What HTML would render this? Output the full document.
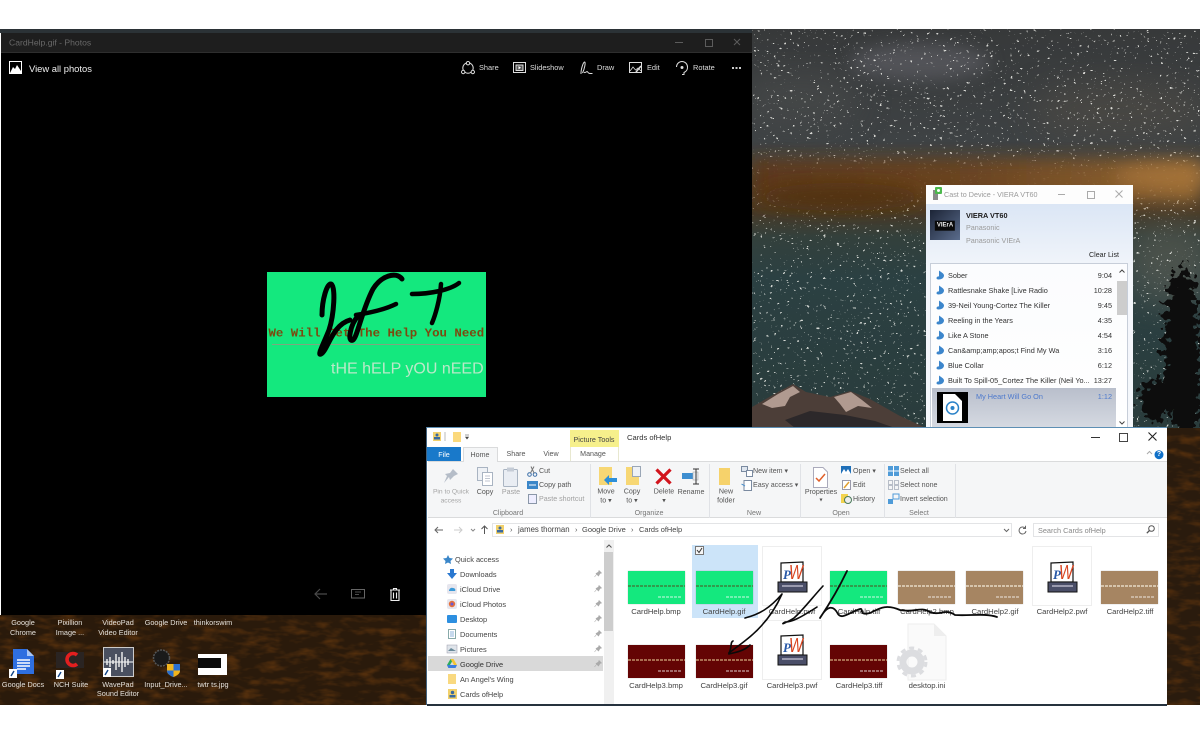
<!DOCTYPE html>
<html><head><meta charset="utf-8"><style>
html,body{margin:0;padding:0;background:#fff}
#p{position:relative;width:1200px;height:734px;overflow:hidden;background:#fff;font-family:"Liberation Sans",sans-serif;font-size:8px;color:#333;filter:blur(.3px)}
.a{position:absolute}
.t,.c,.r{position:absolute;white-space:nowrap;line-height:1}
.t{transform:translateY(calc(-50% + .7px))}
.c{transform:translate(-50%,calc(-50% + .7px));text-align:center}
.r{transform:translate(-100%,calc(-50% + .7px))}
svg{position:absolute;overflow:visible}
.w{color:#f0f0f0}
.g{color:#9a9a9a;font-size:7.2px}
.d{color:#e4e0da;font-size:7.3px}
.tb{color:#ddd;font-size:7.4px}
.th{position:absolute;width:57px;height:33px;box-shadow:0 0 1px rgba(0,0,0,.3)}
.th i{position:absolute;left:0;right:0;top:14px;height:1.500px;opacity:.7;background:repeating-linear-gradient(90deg,currentColor 0 3px,transparent 3px 4px)}
.th b{position:absolute;left:30px;right:3px;top:25px;height:2px;background:repeating-linear-gradient(90deg,#fff6 0 3px,transparent 3px 4px)}
.gr{background:#14e87e;color:#3f7a3a}
.br{background:#a68562;color:#eadfcc}
.rd{background:#640404;color:#c89a70}
.n{font-size:7.4px;color:#444}
.f{font-size:7.700px;color:#444}
.l{font-size:7.300px;color:#333}
.sep{position:absolute;top:464px;height:54px;width:1px;background:#e0e2e6}
.rb{font-size:7.100px;color:#555}
</style></head><body><div id="p">

<!-- wallpaper -->
<svg class="a" style="left:0;top:0" width="1200" height="734">
<defs>
<linearGradient id="sky" x1="0" y1="0" x2="0" y2="1">
<stop offset="0" stop-color="#37393a"/><stop offset=".28" stop-color="#3e4244"/><stop offset=".34" stop-color="#4a443a"/><stop offset=".45" stop-color="#4a3a26"/><stop offset=".52" stop-color="#33403c"/><stop offset=".62" stop-color="#2b4042"/><stop offset="1" stop-color="#2a3c3c"/>
</linearGradient>
<linearGradient id="band" x1="0" y1="0" x2="1" y2="0"><stop offset="0" stop-color="#5e3819"/><stop offset=".5" stop-color="#6e4520"/><stop offset="1" stop-color="#9a6c34"/></linearGradient>
<filter id="bl" x="-30%" y="-50%" width="160%" height="200%"><feGaussianBlur stdDeviation="8"/></filter>
<filter id="bl2" x="-30%" y="-30%" width="160%" height="160%"><feGaussianBlur stdDeviation="16"/></filter>
<filter id="st" x="0" y="0" width="100%" height="100%"><feTurbulence type="fractalNoise" baseFrequency="0.3 0.4" numOctaves="2" seed="7"/><feColorMatrix type="matrix" values="0 0 0 0 1 0 0 0 0 1 0 0 0 0 .95 20 0 0 0 -14"/></filter>
<filter id="gr" x="0" y="0" width="100%" height="100%" color-interpolation-filters="sRGB"><feTurbulence type="fractalNoise" baseFrequency="0.05 0.14" numOctaves="3" seed="3"/><feColorMatrix type="matrix" values="0 0 0 0 .32 0 0 0 0 .18 0 0 0 0 .05 2.600 0 0 0 -1.150"/></filter>
<filter id="tr" x="-20%" y="-20%" width="140%" height="140%"><feTurbulence type="fractalNoise" baseFrequency="0.16" numOctaves="2" seed="11" result="n"/><feDisplacementMap in="SourceGraphic" in2="n" scale="26" xChannelSelector="R" yChannelSelector="G"/></filter>
</defs>
<rect x="752" y="29" width="448" height="400" fill="url(#sky)"/>
<ellipse cx="920" cy="62" rx="70" ry="18" fill="#63636a" opacity=".6" filter="url(#bl)"/>
<ellipse cx="1120" cy="110" rx="90" ry="30" fill="#4f4c45" opacity=".6" filter="url(#bl2)"/>
<ellipse cx="800" cy="100" rx="60" ry="30" fill="#484c4c" opacity=".6" filter="url(#bl2)"/>
<ellipse cx="1170" cy="265" rx="45" ry="40" fill="#5f5e54" opacity=".6" filter="url(#bl2)"/>
<rect x="752" y="29" width="448" height="400" filter="url(#st)" opacity=".8"/>
<rect x="752" y="160" width="448" height="42" fill="url(#band)" opacity=".92" filter="url(#bl)"/>
<ellipse cx="1170" cy="176" rx="55" ry="12" fill="#b07a3c" opacity=".6" filter="url(#bl)"/>
<ellipse cx="840" cy="197" rx="80" ry="14" fill="#51300f" opacity=".8" filter="url(#bl)"/>
<path d="M752 428V407L778 392 793 384 806 392 830 397 850 391 870 399 900 416 926 428Z" fill="#4c3e38"/>
<path d="M762 404L778 394 793 386 800 392 790 397 785 406 772 408ZM834 397L851 392 862 400 872 408 858 406 846 412 840 404Z" fill="#b09a90"/>
<path d="M785 420L810 411 845 415 875 421 895 428H795Z" fill="#2c282a"/>
<g filter="url(#tr)" fill="#0e0d0b">
<ellipse cx="1182" cy="350" rx="18" ry="82"/>
<ellipse cx="1155" cy="400" rx="16" ry="20"/>
<ellipse cx="1185" cy="300" rx="6" ry="36"/>
<rect x="1176" y="380" width="24" height="50"/>
</g>
<rect x="1167" y="428" width="33" height="277" fill="#2a1b0d"/>
<rect x="1167" y="428" width="33" height="277" filter="url(#gr)"/>
<rect x="0" y="615" width="427" height="90" fill="#2a1a0b"/>
<rect x="0" y="615" width="427" height="90" filter="url(#gr)"/>
<rect x="0" y="29" width="752" height="4" fill="#2b3236"/>
</svg>

<!-- photos window -->
<div class="a" style="left:1px;top:33px;width:751px;height:19px;background:#1e1e1e;border-bottom:1px solid #2e2e2e"></div>
<div class="a" style="left:1px;top:53px;width:751px;height:562px;background:#000"></div>
<div class="t" style="left:9px;top:42px;font-size:8.600px;color:#686868">CardHelp.gif - Photos</div>
<div class="a" style="left:675px;top:42px;width:8px;height:1px;background:#5c5c5c"></div>
<div class="a" style="left:705px;top:39px;width:6px;height:6px;border:1px solid #5c5c5c"></div>
<svg style="left:733px;top:38px" width="8" height="8"><path d="M1 1L7 7M7 1L1 7" stroke="#5c5c5c"/></svg>

<svg style="left:9px;top:61px" width="13" height="13"><rect x=".5" y=".5" width="12" height="12" fill="#000" stroke="#fff"/><path d="M1 12L4 6 6 8 8 4 12 10V12Z" fill="#fff"/></svg>
<div class="t w" style="left:29px;top:68px;font-size:9.400px">View all photos</div>

<svg style="left:461px;top:61px" width="14" height="14" fill="none" stroke="#ddd"><circle cx="7" cy="7" r="5.200"/><circle cx="7" cy="2.200" r="1.700" fill="#000"/><circle cx="2.200" cy="11" r="1.700" fill="#000"/><circle cx="11.800" cy="11" r="1.700" fill="#000"/></svg>
<div class="t tb" style="left:479px;top:67px">Share</div>
<svg style="left:513px;top:62px" width="13" height="12" fill="none" stroke="#ddd"><rect x=".5" y=".5" width="12" height="10"/><rect x="3" y="3" width="7" height="5.500" fill="#555"/><path d="M5.500 4L8 5.700 5.500 7.400Z" fill="#fff" stroke="none"/></svg>
<div class="t tb" style="left:530px;top:67px">Slideshow</div>
<svg style="left:580px;top:61px" width="13" height="14" fill="none" stroke="#ddd"><path d="M1 13C.8 9 3 1.500 4.500 1 6 1 4.500 8 2.500 12M4 11C5 13 7 9 8 11.500 9 13 11 12.500 12.500 12.500"/></svg>
<div class="t tb" style="left:597px;top:67px">Draw</div>
<svg style="left:629px;top:62px" width="13" height="12" fill="none" stroke="#ddd"><rect x=".5" y=".5" width="12" height="10"/><path d="M1 9L4 5 6.500 8 9 6 12 9" stroke-width=".8"/><path d="M7 10L12 4" stroke-width="1.600"/></svg>
<div class="t tb" style="left:647px;top:67px">Edit</div>
<svg style="left:675px;top:61px" width="14" height="14" fill="none" stroke="#ddd"><path d="M1.500 6A5.500 5.500 0 0 1 12.500 6 5.500 5.500 0 0 1 9 11.500V13.500H7"/><circle cx="7" cy="6.500" r="1" fill="#ddd"/></svg>
<div class="t tb" style="left:693px;top:67px">Rotate</div>
<div class="a" style="left:732px;top:67px;width:2px;height:2px;background:#ccc;box-shadow:3.500px 0 #ccc,7px 0 #ccc"></div>

<!-- card -->
<div class="a" style="left:267px;top:272px;width:219px;height:124.500px;background:#14e87e"></div>
<div class="t" style="left:268.500px;top:333px;font:bold 12.400px 'Liberation Mono',monospace;color:#7b4a10">We Will Get The Help You Need</div>
<div class="a" style="left:272px;top:343.500px;width:208px;height:1.500px;background:#7fa67f"></div>
<div class="t" style="left:331px;top:368.500px;font-size:16px;color:#b9e9c8">tHE hELP yOU nEED</div>
<svg style="left:0;top:0" width="1200" height="734" fill="none" stroke="#000" stroke-width="5" stroke-linecap="round" stroke-linejoin="round">
<path d="M322 315C322 300 327 283 331 284 336 286 334 315 329 330 323 345 317 356 321 354 328 350 332 325 350 320"/>
<path d="M402 279C396 271 381 276 373 289 362 310 357 338 353 340 347 343 350 325 358 316"/>
<path d="M356 315C375 312 388 308 396 304" stroke-width="4.500"/>
<path d="M412 294C430 294 450 290 459 283M441 284C440 300 435 316 432 323" stroke-width="4.500"/>
</svg>

<svg style="left:314px;top:588px" width="13" height="12" fill="none" stroke="#4a4a4a" stroke-width="1.200"><path d="M13 6H1M6 1L1 6 6 11"/></svg>
<svg style="left:351px;top:589px" width="14" height="11" fill="none" stroke="#666"><rect x=".5" y=".5" width="13" height="8.500"/><path d="M4 3H10M4 5.500H8" stroke-width=".8"/></svg>
<svg style="left:390px;top:588px" width="10" height="13" fill="none" stroke="#eee" stroke-width="1.100"><path d="M0 2H10M3.500 2V.5H6.500V2M1 2V12.500H9V2M3.500 4.500V10.500M6.500 4.500V10.500"/></svg>

<!-- desktop -->
<div class="c d" style="left:23px;top:627px;line-height:9.600px">Google<br>Chrome</div>
<div class="c d" style="left:70px;top:627px;line-height:9.600px">Pixillion<br>Image ...</div>
<div class="c d" style="left:118px;top:627px;line-height:9.600px">VideoPad<br>Video Editor</div>
<div class="c d" style="left:166px;top:622px">Google Drive</div>
<div class="c d" style="left:213px;top:622px">thinkorswim</div>
<svg style="left:9px;top:649px" width="26" height="30"><path d="M4 0H18L25 7V25H4Z" fill="#2f6fe0"/><path d="M18 0L25 7H18Z" fill="#a9c6f5"/><path d="M8 11H21M8 14H21M8 17H21M8 20H17" stroke="#fff" stroke-width="1.400"/><rect y="20" width="8" height="9" fill="#fff"/><path d="M2 27L5 22" stroke="#148" stroke-width="1.400"/></svg>
<div class="c d" style="left:23px;top:684px">Google Docs</div>
<svg style="left:56px;top:651px" width="30" height="28"><rect width="28" height="16" y="1" fill="#2a2422"/><path d="M21 4A6 6 0 1 0 21 13" fill="none" stroke="#e21f1f" stroke-width="3.600"/><rect x="0" y="19" width="8" height="9" fill="#fff"/><path d="M2 26L5 21" stroke="#148" stroke-width="1.400"/></svg>
<div class="c d" style="left:71px;top:684px">NCH Suite</div>
<svg style="left:103px;top:647px" width="31" height="30"><rect width="30" height="29" x=".5" y=".5" fill="#4a5060" stroke="#ccc"/><path d="M1 15H30" stroke="#fff"/><path d="M4 12V18M7 10V20M10 13V17M13 7V23M16 10V20M19 5V25M22 10V20M25 12V18" stroke="#f2f2f2" stroke-width="1.400"/><rect x="0" y="21" width="8" height="9" fill="#fff"/><path d="M2 28L5 23" stroke="#148" stroke-width="1.400"/></svg>
<div class="c d" style="left:118px;top:688.500px;line-height:9.600px">WavePad<br>Sound Editor</div>
<svg style="left:152px;top:648px" width="30" height="30"><circle cx="9.500" cy="10" r="8" fill="#1a1a1a" stroke="#555" stroke-width="1.500" stroke-dasharray="2 1"/><path d="M15 16H28V23C28 26 24 28 21.500 29 19 28 15 26 15 23Z" fill="#f2b51d"/><path d="M21.500 16H28V22.500H21.500ZM15 22.500H21.500V29C19 28 15 26 15 23Z" fill="#2a6fd0"/></svg>
<div class="c d" style="left:166px;top:684px">Input_Drive...</div>
<div class="a" style="left:198px;top:654px;width:29px;height:21px;background:#fff"></div>
<div class="a" style="left:198px;top:658px;width:23px;height:10px;background:#0b0b0b"></div>
<div class="c d" style="left:213px;top:684px">twtr ts.jpg</div>

<!-- cast window -->
<div class="a" style="left:926px;top:185px;width:207px;height:19px;background:#fdfdfd"></div>
<div class="a" style="left:926px;top:204px;width:207px;height:224px;background:linear-gradient(#dbe6f5,#f3f6fb 30%,#f5f7fb)"></div>
<svg style="left:932px;top:187px" width="11" height="14"><rect x="1" y="3" width="5" height="10" fill="#8a8a8a"/><rect x="3" y="0" width="7" height="7" rx="1" fill="#4cb84c"/><circle cx="6.500" cy="3.500" r="1.500" fill="#fff"/></svg>
<div class="t" style="left:944px;top:194px;font-size:7.200px;color:#9a9a9a">Cast to Device - VIERA VT60</div>
<div class="a" style="left:1058px;top:194px;width:7px;height:1px;background:#aaa"></div>
<div class="a" style="left:1087px;top:190.500px;width:6px;height:6px;border:1px solid #aaa"></div>
<svg style="left:1115px;top:190px" width="8" height="8"><path d="M.5 .5L7.500 7.500M7.500 .5L.5 7.500" stroke="#aaa"/></svg>
<div class="a" style="left:930px;top:210px;width:30px;height:30px;background:linear-gradient(135deg,#1c2436,#5a6c8c)"></div>
<div class="c" style="left:945px;top:225px;background:#0a0a0a;color:#eee;font:bold 6px 'Liberation Sans',sans-serif;padding:2px 2px">VIErA</div>
<div class="t" style="left:966px;top:215px;font-weight:bold;font-size:7.300px;color:#1a1a1a">VIERA VT60</div>
<div class="t g" style="left:966px;top:227px">Panasonic</div>
<div class="t g" style="left:966px;top:239.500px">Panasonic VIErA</div>
<div class="r" style="left:1119px;top:255px;color:#222;font-size:7.100px">Clear List</div>
<div class="a" style="left:930px;top:263px;width:198px;height:165px;background:linear-gradient(#fbfcfe,#fff);border:1px solid #c7ced9;border-bottom:0;box-sizing:border-box"></div>
<div class="a" style="left:1117px;top:281px;width:10px;height:34px;background:#cdcdcd"></div>
<svg style="left:1119px;top:269px" width="6" height="4" fill="none" stroke="#444"><path d="M.5 3.500L3 1 5.500 3.500"/></svg>
<svg style="left:1119px;top:421px" width="6" height="4" fill="none" stroke="#444"><path d="M.5 .5L3 3 5.500 .5"/></svg>

<svg style="left:936px;top:270px" width="9" height="120" fill="#3c86cc">
<path d="M3 .5C5 2 8 3.500 8 5.500 8 8 5.500 9.500 2.500 9.500 .5 9.500 0 8 1 7 1.800 6.300 2.500 6.300 3 6.500Z"/>
<path transform="translate(0,15)" d="M3 .5C5 2 8 3.500 8 5.500 8 8 5.500 9.500 2.500 9.500 .5 9.500 0 8 1 7 1.800 6.300 2.500 6.300 3 6.500Z"/>
<path transform="translate(0,30)" d="M3 .5C5 2 8 3.500 8 5.500 8 8 5.500 9.500 2.500 9.500 .5 9.500 0 8 1 7 1.800 6.300 2.500 6.300 3 6.500Z"/>
<path transform="translate(0,45)" d="M3 .5C5 2 8 3.500 8 5.500 8 8 5.500 9.500 2.500 9.500 .5 9.500 0 8 1 7 1.800 6.300 2.500 6.300 3 6.500Z"/>
<path transform="translate(0,60)" d="M3 .5C5 2 8 3.500 8 5.500 8 8 5.500 9.500 2.500 9.500 .5 9.500 0 8 1 7 1.800 6.300 2.500 6.300 3 6.500Z"/>
<path transform="translate(0,75)" d="M3 .5C5 2 8 3.500 8 5.500 8 8 5.500 9.500 2.500 9.500 .5 9.500 0 8 1 7 1.800 6.300 2.500 6.300 3 6.500Z"/>
<path transform="translate(0,90)" d="M3 .5C5 2 8 3.500 8 5.500 8 8 5.500 9.500 2.500 9.500 .5 9.500 0 8 1 7 1.800 6.300 2.500 6.300 3 6.500Z"/>
<path transform="translate(0,105)" d="M3 .5C5 2 8 3.500 8 5.500 8 8 5.500 9.500 2.500 9.500 .5 9.500 0 8 1 7 1.800 6.300 2.500 6.300 3 6.500Z"/>
</svg>
<div class="t l" style="left:948px;top:275px">Sober</div><div class="r l" style="left:1112px;top:275px">9:04</div>
<div class="t l" style="left:948px;top:290px">Rattlesnake Shake [Live Radio</div><div class="r l" style="left:1112px;top:290px">10:28</div>
<div class="t l" style="left:948px;top:305px">39-Neil Young-Cortez The Killer</div><div class="r l" style="left:1112px;top:305px">9:45</div>
<div class="t l" style="left:948px;top:320px">Reeling in the Years</div><div class="r l" style="left:1112px;top:320px">4:35</div>
<div class="t l" style="left:948px;top:335px">Like A Stone</div><div class="r l" style="left:1112px;top:335px">4:54</div>
<div class="t l" style="left:948px;top:350px">Can&amp;amp;amp;apos;t Find My Wa</div><div class="r l" style="left:1112px;top:350px">3:16</div>
<div class="t l" style="left:948px;top:365px">Blue Collar</div><div class="r l" style="left:1112px;top:365px">6:12</div>
<div class="t l" style="left:948px;top:380px">Built To Spill-05_Cortez The Killer (Neil Yo...</div><div class="r l" style="left:1112px;top:380px">13:27</div>
<div class="a" style="left:932px;top:388px;width:184px;height:40px;background:linear-gradient(#b9bfcc,#d6dae2)"></div>
<div class="a" style="left:937px;top:392px;width:31px;height:31px;background:#000"></div>
<svg style="left:942px;top:393px" width="21" height="29"><path d="M1 1H13L20 8V28H1Z" fill="#fff"/><circle cx="10.500" cy="15" r="6" fill="none" stroke="#2a82c8" stroke-width="1.500"/><circle cx="10.500" cy="15" r="2" fill="#2a82c8"/></svg>
<div class="t" style="left:976px;top:396px;color:#4d79cc;font-size:7.300px">My Heart Will Go On</div>
<div class="r" style="left:1112px;top:396px;color:#4d79cc;font-size:7.300px">1:12</div>

<!-- explorer -->
<div class="a" style="left:426px;top:427px;width:741px;height:278px;background:#fff;border-left:1px solid #43637f;border-top:1px solid #5d8fb4;box-sizing:border-box"></div>
<div class="a" style="left:427px;top:704px;width:740px;height:1.500px;background:#26323e"></div>
<div class="a" style="left:428px;top:461px;width:739px;height:57px;background:#f5f6f7;border-top:1px solid #dadbdc;border-bottom:1px solid #dadbdc;box-sizing:border-box"></div>

<svg style="left:432px;top:431px" width="40" height="12"><rect x="1" y="1" width="8" height="9" fill="#f2d16b"/><circle cx="5" cy="4" r="1.500" fill="#3a6aa0"/><rect x="2" y="6" width="6" height="2.500" fill="#3a6aa0"/><path d="M13 1V10" stroke="#bbb"/><rect x="21" y="1" width="8" height="10" fill="#fbd97c"/><path d="M33 4H37M33.500 6L35 8 36.500 6Z" fill="#444" stroke="#444" stroke-width=".6"/></svg>
<div class="a" style="left:570px;top:430px;width:49px;height:17px;background:#f6f08c"></div>
<div class="c" style="left:594px;top:438.500px;font-size:7.200px;color:#444">Picture Tools</div>
<div class="t" style="left:627px;top:437px;font-size:7.600px;color:#333">Cards ofHelp</div>
<div class="a" style="left:1091px;top:437px;width:9px;height:1.200px;background:#333"></div>
<div class="a" style="left:1119px;top:433px;width:7px;height:7px;border:1px solid #444"></div>
<svg style="left:1148px;top:432px" width="9" height="9"><path d="M.5 .5L8.500 8.500M8.500 .5L.5 8.500" stroke="#222" stroke-width="1.100"/></svg>
<svg style="left:1146px;top:450px" width="7" height="5"><path d="M1 4L3.500 1.500 6 4" fill="none" stroke="#aaa"/></svg>
<div class="c" style="left:1159px;top:453.500px;width:9px;height:9px;line-height:9px;border-radius:5px;background:#1070c8;color:#fff;font-size:7px;font-weight:bold">?</div>

<div class="a" style="left:427px;top:447px;width:34px;height:14px;background:#1979ca"></div>
<div class="c" style="left:444px;top:453.500px;color:#fff;font-size:7.200px">File</div>
<div class="a" style="left:463px;top:447px;width:35px;height:15px;background:#f5f6f7;border:1px solid #dadbdc;border-bottom:0;box-sizing:border-box"></div>
<div class="c rb" style="left:480px;top:454.500px">Home</div>
<div class="c rb" style="left:516px;top:454px">Share</div>
<div class="c rb" style="left:551px;top:454px">View</div>
<div class="a" style="left:570px;top:447px;width:49px;height:14px;border-left:1px solid #e8e8d0;border-right:1px solid #e8e8d0;box-sizing:border-box"></div>
<div class="c rb" style="left:593px;top:454px">Manage</div>

<!-- ribbon: clipboard -->
<svg style="left:443px;top:468px" width="16" height="16"><path d="M10 1L15 6 11 8 7 12 6 9 1 15 4 8 2 6 7 5Z" fill="#b5bdc8"/></svg>
<div class="c rb" style="left:451px;top:496px;line-height:9px;color:#a5a5a5;font-size:6.700px">Pin to Quick<br>access</div>
<svg style="left:477px;top:467px" width="17" height="19"><rect x=".5" y=".5" width="10" height="13" fill="#eef1f5" stroke="#a9b4c2"/><rect x="5.500" y="5.500" width="10" height="13" fill="#fff" stroke="#a9b4c2"/><path d="M8 9H13M8 11.500H13M8 14H13" stroke="#c0c6d0"/></svg>
<div class="c rb" style="left:485px;top:492px">Copy</div>
<svg style="left:503px;top:467px" width="16" height="20"><rect x=".5" y="2.500" width="14" height="17" rx="1" fill="#e9edf3" stroke="#a9b4c2"/><rect x="4" y=".5" width="7" height="4" fill="#c5ccd6"/></svg>
<div class="c rb" style="left:511px;top:492px;color:#a0a0a0">Paste</div>
<svg style="left:527px;top:466px" width="11" height="11" fill="none" stroke="#3a6ea8"><circle cx="2.500" cy="8.500" r="1.800"/><circle cx="8" cy="8.500" r="1.800"/><path d="M3.500 7L7 .5M7 7L4 .5" stroke="#777"/></svg>
<div class="t rb" style="left:539px;top:470.500px">Cut</div>
<svg style="left:527px;top:481px" width="11" height="8"><rect width="11" height="8" fill="#3a86c8"/><path d="M2 4H9" stroke="#fff"/></svg>
<div class="t rb" style="left:539px;top:484.500px">Copy path</div>
<svg style="left:528px;top:494px" width="9" height="10"><rect x=".5" y=".5" width="8" height="9" fill="#eef" stroke="#8a97a8"/></svg>
<div class="t rb" style="left:539px;top:498.500px;color:#a0a0a0">Paste shortcut</div>
<div class="c rb" style="left:508px;top:512.500px;color:#777">Clipboard</div>
<div class="sep" style="left:590px"></div>

<!-- organize -->
<svg style="left:599px;top:466px" width="18" height="20"><rect y="1" width="13" height="18" fill="#f7d774"/><path d="M18 12H10V9L5 14 10 19V16H18Z" fill="#2d8fd8"/></svg>
<div class="c rb" style="left:606px;top:496px;line-height:9px">Move<br>to ▾</div>
<svg style="left:626px;top:466px" width="17" height="20"><rect y="1" width="13" height="18" fill="#f7d774"/><rect x="6.500" y=".5" width="8" height="10" fill="#eef1f5" stroke="#9aa6b6"/></svg>
<div class="c rb" style="left:632px;top:496px;line-height:9px">Copy<br>to ▾</div>
<svg style="left:655px;top:468px" width="17" height="17"><path d="M1.500 1.500L15.500 15.500M15.500 1.500L1.500 15.500" stroke="#d2141c" stroke-width="3.200"/></svg>
<div class="c rb" style="left:664px;top:496px;line-height:9px">Delete<br>▾</div>
<svg style="left:682px;top:468px" width="19" height="17"><rect y="5" width="11" height="6" fill="#3e8ed0"/><rect x="11" y="4" width="5" height="8" fill="#e8ecf2" stroke="#aaa" stroke-width=".6"/><path d="M11 1H17M14 1V16M11 16H17" stroke="#333" stroke-width="1"/></svg>
<div class="c rb" style="left:691px;top:492px">Rename</div>
<div class="c rb" style="left:649px;top:512.500px;color:#777">Organize</div>
<div class="sep" style="left:709px"></div>

<!-- new -->
<svg style="left:719px;top:468px" width="12" height="18"><rect width="11" height="17" fill="#f6d26b"/></svg>
<div class="c rb" style="left:726px;top:496px;line-height:9px">New<br>folder</div>
<svg style="left:741px;top:466px" width="12" height="11" fill="none" stroke="#7a8aa0"><rect x=".5" y=".5" width="6" height="5" fill="#dfe6ef"/><rect x="5.500" y="4.500" width="6" height="6" fill="#fff"/></svg>
<div class="t rb" style="left:753px;top:470.500px">New item ▾</div>
<svg style="left:741px;top:480px" width="11" height="11" fill="none" stroke="#7a8aa0"><path d="M3 .5H10.500V10.500H3Z" fill="#fff"/><path d="M.5 4L4 6" stroke="#3a86c8"/></svg>
<div class="t rb" style="left:753px;top:484.500px">Easy access ▾</div>
<div class="c rb" style="left:754px;top:512.500px;color:#777">New</div>
<div class="sep" style="left:800px"></div>

<!-- open -->
<svg style="left:813px;top:467px" width="15" height="21"><path d="M.5 .5H10L14.500 5V20.500H.5Z" fill="#fff" stroke="#aab"/><path d="M3 11L6 14 12 7" fill="none" stroke="#e0602a" stroke-width="1.500"/></svg>
<div class="c rb" style="left:821px;top:492px">Properties</div>
<div class="c rb" style="left:821px;top:500px;font-size:6px">▾</div>
<svg style="left:841px;top:466px" width="10" height="8"><rect width="10" height="8" fill="#1f6fb8"/><path d="M0 8L3 3 5 6 7 3 10 8Z" fill="#fff"/></svg>
<div class="t rb" style="left:853px;top:470.500px">Open ▾</div>
<svg style="left:842px;top:480px" width="9" height="10"><rect x=".5" y=".5" width="8" height="9" fill="#fff" stroke="#99a"/><path d="M2 8L7 2" stroke="#e2a030" stroke-width="1.500"/></svg>
<div class="t rb" style="left:853px;top:484.500px">Edit</div>
<svg style="left:841px;top:494px" width="11" height="10"><rect width="7" height="9" fill="#f2d34e"/><circle cx="7" cy="6" r="3.500" fill="#eee" stroke="#4a7a5a"/></svg>
<div class="t rb" style="left:853px;top:498.500px">History</div>
<div class="c rb" style="left:841px;top:512.500px;color:#777">Open</div>
<div class="sep" style="left:884px"></div>

<!-- select -->
<svg style="left:888px;top:466px" width="11" height="10"><rect width="11" height="10" fill="#4f9bd8"/><path d="M5.500 0V10M0 5H11" stroke="#fff"/></svg>
<div class="t rb" style="left:900px;top:470.500px">Select all</div>
<svg style="left:888px;top:480px" width="11" height="10" fill="none" stroke="#b8bec8"><rect x=".5" y=".5" width="4" height="4"/><rect x="6.500" y=".5" width="4" height="4"/><rect x=".5" y="5.500" width="4" height="4"/><rect x="6.500" y="5.500" width="4" height="4"/></svg>
<div class="t rb" style="left:900px;top:484.500px">Select none</div>
<svg style="left:888px;top:494px" width="11" height="10"><rect x="5" width="6" height="5" fill="none" stroke="#4f9bd8"/><rect y="5" width="5" height="5" fill="#4f9bd8"/></svg>
<div class="t rb" style="left:900px;top:498.500px">Invert selection</div>
<div class="c rb" style="left:919px;top:512.500px;color:#777">Select</div>
<div class="sep" style="left:955px"></div>

<!-- address -->
<svg style="left:434px;top:525px" width="60" height="10" fill="none"><path d="M9 5H1M4 2L1 5 4 8" stroke="#666"/><path d="M20 5H28M25 2L28 5 25 8" stroke="#ccc"/><path d="M37 4L39 6 41 4" stroke="#888"/><path d="M50.500 9V1M47.500 4L50.500 1 53.500 4" stroke="#555"/></svg>
<div class="a" style="left:492px;top:523px;width:520px;height:14px;border:1px solid #e3e4e6;box-sizing:border-box"></div>
<svg style="left:496px;top:525px" width="9" height="9"><rect width="8" height="9" fill="#f2d16b"/><circle cx="4" cy="3" r="1.500" fill="#3a6aa0"/><rect x="1" y="5" width="6" height="2.500" fill="#3a6aa0"/></svg>
<div class="t n" style="left:510px;top:529px;color:#555">›</div>
<div class="t n" style="left:518px;top:529px;font-size:7.800px">james thorman</div>
<div class="t n" style="left:575px;top:529px;color:#555">›</div>
<div class="t n" style="left:582px;top:529px;font-size:7.500px">Google Drive</div>
<div class="t n" style="left:631px;top:529px;color:#555">›</div>
<div class="t n" style="left:639px;top:529px">Cards ofHelp</div>
<svg style="left:1004px;top:525px" width="24" height="10" fill="none" stroke="#666"><path d="M0 4L2.500 6.500 5 4"/><path d="M21 3A3.500 3.500 0 1 0 22 6M21.500 .8V3.500H19"/></svg>
<div class="a" style="left:1033px;top:523px;width:126px;height:14px;border:1px solid #e3e4e6;box-sizing:border-box"></div>
<div class="t" style="left:1038px;top:529.500px;font-size:7.300px;color:#888">Search Cards ofHelp</div>
<svg style="left:1146px;top:525px" width="9" height="9" fill="none" stroke="#555"><circle cx="5.500" cy="3.500" r="2.800"/><path d="M3.500 5.500L.8 8.200" stroke-width="1.300"/></svg>

<!-- nav -->
<div class="a" style="left:428px;top:656px;width:175px;height:15px;background:#d9d9d9"></div>
<div class="a" style="left:604px;top:540px;width:10px;height:164px;background:#f0f0f0"></div>
<div class="a" style="left:604px;top:552px;width:9px;height:79px;background:#cdcdcd"></div>
<svg style="left:606px;top:544px" width="6" height="4" fill="none" stroke="#555"><path d="M.5 3.500L3 1 5.500 3.500"/></svg>
<svg style="left:443px;top:555px" width="10" height="9"><path d="M5 0L6.500 3 10 3.500 7.500 6 8 9 5 7.500 2 9 2.500 6 0 3.500 3.500 3Z" fill="#3a86c8"/></svg>
<div class="t n" style="left:455px;top:559px">Quick access</div>
<svg style="left:447px;top:569px" width="10" height="10"><path d="M3 0H7V4H10L5 10 0 4H3Z" fill="#2a78d0"/></svg>
<div class="t n" style="left:460px;top:574px">Downloads</div>
<svg style="left:447px;top:584px" width="10" height="10"><rect width="10" height="10" rx="2" fill="#e6e6ee"/><path d="M2 7C2 5 4 3 6 4 8 4 9 6 8 7Z" fill="#3a9ad8"/></svg>
<div class="t n" style="left:460px;top:589px">iCloud Drive</div>
<svg style="left:447px;top:599px" width="10" height="10"><rect width="10" height="10" rx="2" fill="#e6e6ee"/><circle cx="5" cy="5" r="3.200" fill="#e8703a"/><circle cx="5" cy="5" r="1.500" fill="#6a5ad0"/></svg>
<div class="t n" style="left:460px;top:604px">iCloud Photos</div>
<div class="a" style="left:447px;top:615px;width:10px;height:8px;background:#2d8fe0;border-radius:1px"></div>
<div class="t n" style="left:460px;top:619px">Desktop</div>
<svg style="left:448px;top:629px" width="8" height="10"><rect x=".5" y=".5" width="7" height="9" fill="#fff" stroke="#8aa"/><path d="M2 3H6M2 5H6M2 7H6" stroke="#6a9ad0" stroke-width=".8"/></svg>
<div class="t n" style="left:460px;top:634px">Documents</div>
<svg style="left:447px;top:645px" width="10" height="8"><rect width="10" height="8" fill="#dfe4ea" stroke="#99a" stroke-width=".5"/><path d="M1 6L4 3 9 6Z" fill="#6a8a9a"/></svg>
<div class="t n" style="left:460px;top:649px">Pictures</div>
<svg style="left:447px;top:659px" width="10" height="9"><path d="M3.500 0H6.500L3 6 1.500 9 0 6Z" fill="#2cab5c"/><path d="M6.500 0L10 6H7L3.500 0Z" fill="#f4c430"/><path d="M0 6H10L8.500 9H1.500Z" fill="#3a7de0"/></svg>
<div class="t n" style="left:460px;top:664px;color:#333">Google Drive</div>
<div class="a" style="left:448px;top:674px;width:8px;height:10px;background:#f9d980"></div>
<div class="t n" style="left:460px;top:679px">An Angel's Wing</div>
<svg style="left:448px;top:689px" width="9" height="10"><rect width="9" height="10" fill="#f2d16b"/><circle cx="4.500" cy="3.500" r="1.700" fill="#3a6aa0"/><rect x="1.500" y="6" width="6" height="2.500" fill="#3a6aa0"/></svg>
<div class="t n" style="left:460px;top:694px">Cards ofHelp</div>
<svg style="left:594px;top:570px" width="8" height="100" fill="#aaa"><path d="M5 .5L7.500 3 6 3.500 4.500 6 2 3.500 4.500 2ZM2.500 4.500L.5 7" stroke="#aaa" stroke-width=".6"/><path transform="translate(0,15)" d="M5 .5L7.500 3 6 3.500 4.500 6 2 3.500 4.500 2ZM2.500 4.500L.5 7" stroke="#aaa" stroke-width=".6"/><path transform="translate(0,30)" d="M5 .5L7.500 3 6 3.500 4.500 6 2 3.500 4.500 2ZM2.500 4.500L.5 7" stroke="#aaa" stroke-width=".6"/><path transform="translate(0,45)" d="M5 .5L7.500 3 6 3.500 4.500 6 2 3.500 4.500 2ZM2.500 4.500L.5 7" stroke="#aaa" stroke-width=".6"/><path transform="translate(0,60)" d="M5 .5L7.500 3 6 3.500 4.500 6 2 3.500 4.500 2ZM2.500 4.500L.5 7" stroke="#aaa" stroke-width=".6"/><path transform="translate(0,75)" d="M5 .5L7.500 3 6 3.500 4.500 6 2 3.500 4.500 2ZM2.500 4.500L.5 7" stroke="#aaa" stroke-width=".6"/><path transform="translate(0,90)" d="M5 .5L7.500 3 6 3.500 4.500 6 2 3.500 4.500 2ZM2.500 4.500L.5 7" stroke="#aaa" stroke-width=".6"/></svg>

<!-- files -->
<div class="a" style="left:692px;top:545px;width:66px;height:73px;background:#cce4f9"></div>
<svg style="left:695px;top:546px" width="10" height="9"><rect x=".5" y=".5" width="8" height="8" fill="#f6f6f6" stroke="#777"/><path d="M2 4L4 6.500 7 2" fill="none" stroke="#333"/></svg>
<div class="a" style="left:762px;top:546px;width:60px;height:60px;border:1px solid #eee;box-sizing:border-box;background:#fff"></div>
<div class="a" style="left:1032px;top:546px;width:60px;height:60px;border:1px solid #eee;box-sizing:border-box;background:#fff"></div>
<div class="a" style="left:762px;top:620px;width:60px;height:60px;border:1px solid #eee;box-sizing:border-box;background:#fff"></div>

<div class="th gr" style="left:628px;top:571px"><i></i><b></b></div>
<div class="th gr" style="left:696px;top:571px"><i></i><b></b></div>
<div class="th gr" style="left:830px;top:571px"><i></i><b></b></div>
<div class="th br" style="left:898px;top:571px"><i></i><b></b></div>
<div class="th br" style="left:966px;top:571px"><i></i><b></b></div>
<div class="th br" style="left:1101px;top:571px"><i></i><b></b></div>
<div class="th rd" style="left:628px;top:645px"><i></i><b></b></div>
<div class="th rd" style="left:696px;top:645px"><i></i><b></b></div>
<div class="th rd" style="left:830px;top:645px"><i></i><b></b></div>

<svg style="left:777px;top:561px" width="32" height="32"><path d="M4 2L26 1 26 21H4Z" fill="#fff" stroke="#111" stroke-width="1.200"/><text x="6" y="18" font-family="Liberation Serif,serif" font-style="italic" font-weight="bold" font-size="13" fill="#2a5aa8">P</text><text x="12" y="18" font-family="Liberation Sans,sans-serif" font-style="italic" font-size="20" textLength="14" lengthAdjust="spacingAndGlyphs" fill="#d8431f">W</text><path d="M1 21H30V31H1Z" fill="#4a4e68" stroke="#111"/><path d="M5 25H26" stroke="#9a9aae" stroke-width="2"/></svg>
<svg style="left:1047px;top:561px" width="32" height="32"><path d="M4 2L26 1 26 21H4Z" fill="#fff" stroke="#111" stroke-width="1.200"/><text x="6" y="18" font-family="Liberation Serif,serif" font-style="italic" font-weight="bold" font-size="13" fill="#2a5aa8">P</text><text x="12" y="18" font-family="Liberation Sans,sans-serif" font-style="italic" font-size="20" textLength="14" lengthAdjust="spacingAndGlyphs" fill="#d8431f">W</text><path d="M1 21H30V31H1Z" fill="#4a4e68" stroke="#111"/><path d="M5 25H26" stroke="#9a9aae" stroke-width="2"/></svg>
<svg style="left:777px;top:634px" width="32" height="32"><path d="M4 2L26 1 26 21H4Z" fill="#fff" stroke="#111" stroke-width="1.200"/><text x="6" y="18" font-family="Liberation Serif,serif" font-style="italic" font-weight="bold" font-size="13" fill="#2a5aa8">P</text><text x="12" y="18" font-family="Liberation Sans,sans-serif" font-style="italic" font-size="20" textLength="14" lengthAdjust="spacingAndGlyphs" fill="#d8431f">W</text><path d="M1 21H30V31H1Z" fill="#4a4e68" stroke="#111"/><path d="M5 25H26" stroke="#9a9aae" stroke-width="2"/></svg>

<svg style="left:896px;top:622px" width="52" height="60"><path d="M12 2H38L50 14V58H12Z" fill="#fafafa" stroke="#eee"/><path d="M38 2V14H50Z" fill="#eee"/><circle cx="16" cy="40" r="9" fill="none" stroke="#dcdde0" stroke-width="7"/><circle cx="16" cy="40" r="14" fill="none" stroke="#dcdde0" stroke-width="3" stroke-dasharray="5 4"/></svg>

<div class="c f" style="left:656px;top:611px">CardHelp.bmp</div>
<div class="c f" style="left:724px;top:611px">CardHelp.gif</div>
<div class="c f" style="left:792px;top:611px">CardHelp.pwf</div>
<div class="c f" style="left:859px;top:611px">CardHelp.tiff</div>
<div class="c f" style="left:927px;top:611px">CardHelp2.bmp</div>
<div class="c f" style="left:995px;top:611px">CardHelp2.gif</div>
<div class="c f" style="left:1062px;top:611px">CardHelp2.pwf</div>
<div class="c f" style="left:1130px;top:611px">CardHelp2.tiff</div>
<div class="c f" style="left:656px;top:685px">CardHelp3.bmp</div>
<div class="c f" style="left:724px;top:685px">CardHelp3.gif</div>
<div class="c f" style="left:792px;top:685px">CardHelp3.pwf</div>
<div class="c f" style="left:859px;top:685px">CardHelp3.tiff</div>
<div class="c f" style="left:927px;top:685px">desktop.ini</div>

<!-- signature -->
<svg style="left:0;top:0" width="1200" height="734" fill="none" stroke="#0a0a0a" stroke-width="1.600" stroke-linecap="round" stroke-linejoin="round">
<path d="M745 618C760 614 770 608 782 594 775 610 764 626 746 640 736 648 727 654 729 653 732 648 730 642 733 641M729 654C737 652 744 651 750 645"/>
<path d="M823 586C812 598 803 610 794 618 784 624 780 625 785 622 792 622 800 618 817 607"/>
<path d="M847 571C838 590 828 606 820 618 828 604 834 606 838 614 842 620 850 612 860 609 864 608 858 616 870 613 880 608 886 604 900 610 915 613 920 606 930 612 940 616 945 608 955 615 970 616 985 613 997 617" stroke-width="1.800"/>
</svg>

</div></body></html>
